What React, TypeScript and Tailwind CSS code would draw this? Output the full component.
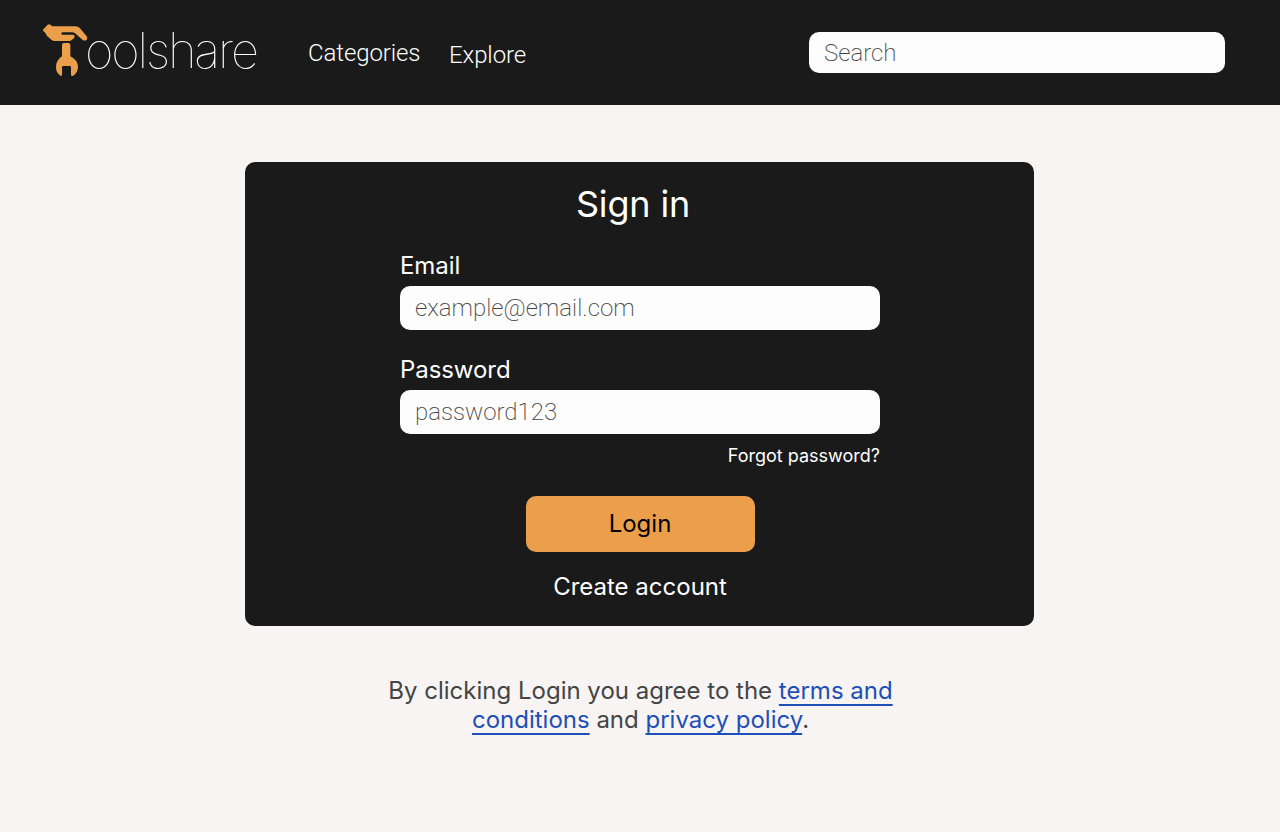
function Logo() {
  return (
    <a href="#" aria-label="Toolshare" className="flex h-[105px] w-[272px] items-start pl-[36px]">
      <svg viewBox="0 0 180 198" className="mt-[16px] h-[66px] w-[60px] shrink-0" fill="#eb9f4b">
        <path d="M21 41 L35 26 Q39 23 43 26 L49 31 L118 31 Q127 31 132 37 L152 61 Q156 66 152 71 Q147 76 140 72 L119 53 Q114 49 108 49 L81 49 Q76 49 76 53 Q76 56 80 56 L111 56 Q116 56 116 61 Q116 67 111 69 L104 74 Q101 75 96 75 L55 75 Q51 75 47 72 L34 61 Q31 58 29 52 L22 45 Q20 43 21 41 Z" />
        <path d="M78 87 Q78 81 84 81 L98 81 Q103 81 103 87 L103 121 Q126 132 126 154 Q125 172 110 180 Q105 181 105 176 L105 153 Q105 150 101 150 L82 150 Q78 150 78 153 L78 176 Q78 181 73 179 Q60 171 60 154 Q60 132 78 121 Z" />
      </svg>
      <span className="-ml-[11px] mt-[21px] whitespace-nowrap font-['Inter'] text-[49px] leading-[60px] font-thin tracking-[-2.15px] text-white">
        oolshare
      </span>
    </a>
  );
}

function Field({ id, label, type, placeholder }: { id: string; label: string; type: string; placeholder: string }) {
  return (
    <div className="flex flex-col">
      <label htmlFor={id} className="mb-[6px] text-[24px] leading-[29px] tracking-[-0.07px] text-white">
        {label}
      </label>
      <input
        id={id}
        type={type}
        placeholder={placeholder}
        className="h-[44px] w-[480px] rounded-[10px] bg-[#fdfdfd] px-[15px] font-['Roboto'] text-[24px] font-extralight text-[#444444] placeholder:text-[#444444] placeholder:opacity-100"
      />
    </div>
  );
}

export default function App() {
  return (
    <div className="flex h-[832px] w-[1280px] flex-col overflow-hidden bg-[#f7f4f3] font-['Inter',sans-serif] will-change-[opacity]">
      <header className="flex h-[105px] shrink-0 items-start bg-[#1a1a1a]">
        <Logo />
        <nav className="flex pl-[36px] font-['Roboto'] text-[24px] leading-[28px] font-light tracking-[-0.1px] text-white">
          <a href="#" className="mt-[39px] w-[141px]">Categories</a>
          <a href="#" className="mt-[41px]">Explore</a>
        </nav>
        <input
          type="text"
          placeholder="Search"
          className="mt-[32px] mr-[55px] ml-auto h-[41px] w-[416px] rounded-[10px] bg-[#fdfdfd] px-[15px] font-['Roboto'] text-[24px] font-extralight text-[#444444] placeholder:text-[#444444] placeholder:opacity-100"
        />
      </header>
      <main className="flex flex-col items-center">
        <form className="mt-[57px] mr-px flex h-[464px] w-[789px] flex-col items-center rounded-[10px] bg-[#1a1a1a] pl-px">
          <h1 className="mt-[20px] mr-[14px] text-[36px] leading-[44px] tracking-[-0.15px] text-white">Sign in</h1>
          <div className="mt-[25px] flex flex-col gap-[25px]">
            <Field id="email" label="Email" type="text" placeholder="example@email.com" />
            <Field id="password" label="Password" type="text" placeholder="password123" />
          </div>
          <div className="flex w-[480px] justify-end">
            <a href="#" className="mt-[11px] text-[18px] leading-[22px] text-white">Forgot password?</a>
          </div>
          <button type="button" className="mt-[29px] h-[56px] w-[229px] rounded-[10px] bg-[#eb9f4b] pb-[2px] text-[24px] leading-[29px] text-black">
            Login
          </button>
          <a href="#" className="mt-[20px] text-[24px] leading-[29px] text-white">Create account</a>
        </form>
        <p className="mt-[50px] ml-px w-[540px] text-center text-[24px] leading-[29px] text-[#444444]">
          By clicking Login you agree to the{" "}
          <a href="#" className="text-[#1d4fb8] underline decoration-[1.5px] underline-offset-[5px] [text-decoration-skip-ink:none]">terms and<br />conditions</a> and{" "}
          <a href="#" className="text-[#1d4fb8] underline decoration-[1.5px] underline-offset-[5px] [text-decoration-skip-ink:none]">privacy policy</a>.
        </p>
      </main>
    </div>
  );
}
